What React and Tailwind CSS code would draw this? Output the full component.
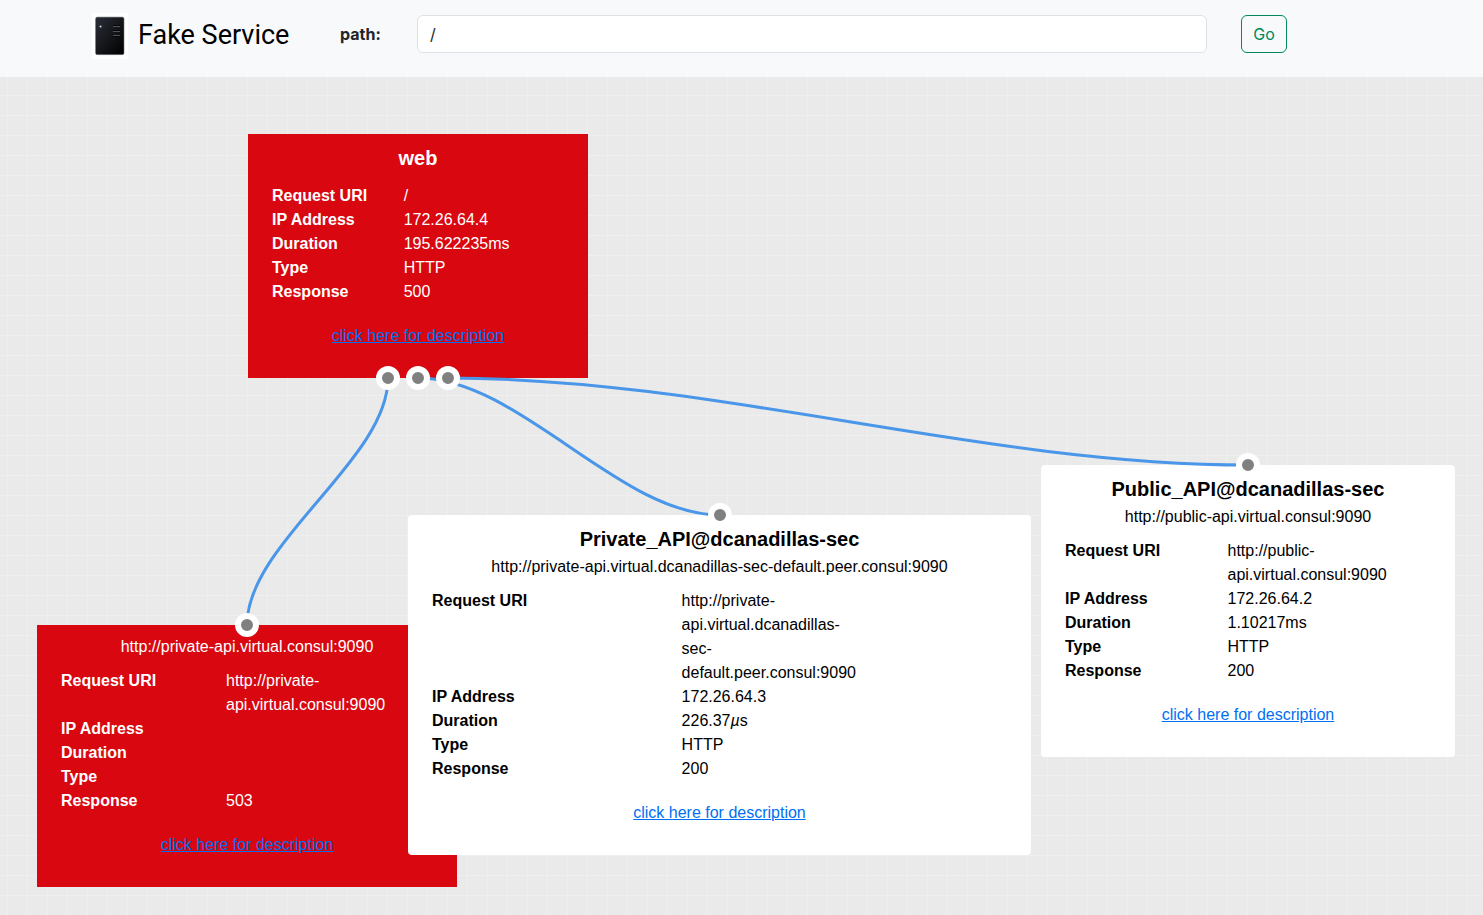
const point = {
  webLeft: [388, 301],
  webMiddle: [418, 301],
  webRight: [448, 301],
  failed: [247, 548],
  privateApi: [720, 438],
  publicApi: [1248, 388],
};

const edges = [
  'M388 301 C388 383 247 466 247 548',
  'M418 301 C519 301 619 438 720 438',
  'M448 301 C715 301 981 388 1248 388',
];

const services = [
  {
    place: 'left-[37px] top-[548px] w-[420px] bg-[#d9070f] text-white',
    address: 'http://private-api.virtual.consul:9090',
    rows: [
      ['Request URI', 'http://private-api.virtual.consul:9090'],
      ['IP Address', ''],
      ['Duration', ''],
      ['Type', ''],
      ['Response', '503'],
    ],
  },
  {
    place: 'left-[248px] top-[57px] w-[340px] bg-[#d9070f] text-white',
    title: 'web',
    rows: [
      ['Request URI', '/'],
      ['IP Address', '172.26.64.4'],
      ['Duration', '195.622235ms'],
      ['Type', 'HTTP'],
      ['Response', '500'],
    ],
  },
  {
    place: 'left-[408px] top-[438px] w-[623px] rounded bg-white text-black',
    title: 'Private_API@dcanadillas-sec',
    address: 'http://private-api.virtual.dcanadillas-sec-default.peer.consul:9090',
    rows: [
      ['Request URI', 'http://private-api.virtual.dcanadillas-sec-default.peer.consul:9090'],
      ['IP Address', '172.26.64.3'],
      ['Duration', <>226.37<i>µ</i>s</>],
      ['Type', 'HTTP'],
      ['Response', '200'],
    ],
  },
  {
    place: 'left-[1041px] top-[388px] w-[414px] rounded bg-white text-black',
    title: 'Public_API@dcanadillas-sec',
    address: 'http://public-api.virtual.consul:9090',
    rows: [
      ['Request URI', 'http://public-api.virtual.consul:9090'],
      ['IP Address', '172.26.64.2'],
      ['Duration', '1.10217ms'],
      ['Type', 'HTTP'],
      ['Response', '200'],
    ],
  },
];

function ServerLogo() {
  return (
    <svg width="36" height="46" viewBox="0 0 36 46" aria-hidden="true">
      <defs>
        <linearGradient id="case" x1="0" y1="0" x2="1" y2="1">
          <stop offset="0" stopColor="#2b2e38" />
          <stop offset="0.5" stopColor="#15171b" />
          <stop offset="1" stopColor="#000" />
        </linearGradient>
      </defs>
      <rect width="36" height="46" fill="#fff" />
      <rect x="3.7" y="4.2" width="28.2" height="37.4" rx="1.5" fill="url(#case)" stroke="#33353b" strokeWidth="0.5" />
      <circle cx="8.5" cy="13.5" r="1.6" fill="#4b4e55" />
      <circle cx="8.5" cy="13.5" r="0.8" fill="#e5e7eb" />
      <path d="M21 13.5h7M21 18.5h7M21 22.5h7" stroke="#50535b" strokeWidth="1" />
      <path d="M21 12.5h7M21 17.5h7M21 23.5h7" stroke="#050506" strokeWidth="1" />
    </svg>
  );
}

function ServiceCard({ place, title, address, rows }) {
  return (
    <article className={`absolute px-6 pt-2.5 pb-[30px] text-base ${place}`}>
      {title && <h2 className="pb-0.5 text-center text-xl leading-7 font-bold">{title}</h2>}
      {address && <p className="text-center">{address}</p>}
      <dl className="-mx-3 mt-2.5">
        {rows.map(([label, value]) => (
          <div key={label} className="grid grid-cols-12">
            <dt className="col-span-5 px-3 font-bold">{label}</dt>
            <dd className="col-span-4 px-3">{value}</dd>
          </div>
        ))}
      </dl>
      <p className="mt-5 text-center">
        <a href="#description" className="text-[#0070f3] underline">click here for description</a>
      </p>
    </article>
  );
}

export default function App() {
  return (
    <div className="flex min-h-screen flex-col bg-[#eaeaea]">
      <header className="flex h-[77px] items-start bg-[#f8f9fb] pl-[92px] pr-[196px] font-['Inter',sans-serif] text-base text-[#212529]">
        <a href="/" className="mt-[13px] flex items-center gap-[10px] text-black">
          <ServerLogo />
          <span className="mb-[2px] w-[152px] font-['Roboto',sans-serif] text-[27px] leading-10 whitespace-nowrap">Fake Service</span>
        </a>
        <form className="mt-[15px] ml-[50px] flex flex-1 items-center">
          <label htmlFor="path" className="w-[77px] font-bold">path:</label>
          <input
            id="path"
            type="text"
            defaultValue="/"
            className="h-[38px] min-w-0 flex-1 rounded-md border border-[#dee2e6] bg-white px-3 outline-none"
          />
          <button type="button" className="ml-[34px] h-[38px] w-[46px] rounded-md border border-[#00875a] text-[#00875a]">
            Go
          </button>
        </form>
      </header>
      <main className="relative flex-1 overflow-hidden bg-[linear-gradient(to_right,#efefef_1px,transparent_1px),linear-gradient(to_bottom,#efefef_1px,transparent_1px)] bg-[size:20px_20px] bg-[position:7px_18px] font-['Liberation_Sans',Arial,sans-serif]">
        {services.map((service) => (
          <ServiceCard key={service.place} {...service} />
        ))}
        <svg className="pointer-events-none absolute inset-0 h-full w-full" aria-hidden="true">
          {edges.map((d) => (
            <path key={d} d={d} fill="none" stroke="#4a96e8" strokeWidth="3" />
          ))}
          {Object.entries(point).map(([name, [x, y]]) => (
            <circle key={name} cx={x} cy={y} r="9" fill="#808080" stroke="#fff" strokeWidth="6" />
          ))}
        </svg>
      </main>
    </div>
  );
}
